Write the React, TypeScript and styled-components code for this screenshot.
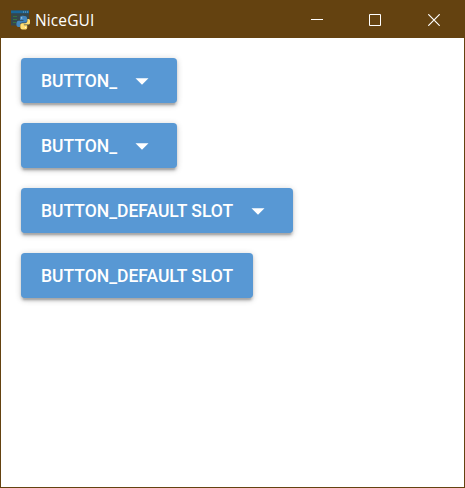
import React from "react";
import styled, { createGlobalStyle } from "styled-components";

const GlobalStyle = createGlobalStyle`
  body {
    margin: 0;
    overflow: hidden;
  }
`;

const Window = styled.div`
  box-sizing: border-box;
  display: flex;
  flex-direction: column;
  width: 465px;
  height: 488px;
  border: 1px solid #644210;
  background: #fff;
`;

const TitleBar = styled.header`
  box-sizing: border-box;
  display: flex;
  align-items: center;
  flex: none;
  height: 37px;
  padding-left: 10px;
  background: #644210;
  color: #fff;
`;

const AppIcon = styled.svg`
  width: 19px;
  height: 20px;
  flex: none;
`;

const Title = styled.span`
  flex: 1;
  margin-left: 5px;
  font: 15.5px/20px "Open Sans", "Noto Sans", sans-serif;
  letter-spacing: 0.12px;
`;

const WindowControl = styled.button`
  display: flex;
  align-items: center;
  justify-content: center;
  width: 58px;
  height: 36px;
  padding: 0;
  border: 0;
  background: transparent;
  color: #fff;

  &:last-child {
    width: 60px;
  }
`;

const ControlGlyph = styled.svg`
  width: 12px;
  height: 12px;
  fill: none;
  stroke: currentColor;
`;

const Content = styled.main`
  display: flex;
  flex-direction: column;
  align-items: flex-start;
  gap: 20px;
  padding: 20px;
`;

const Button = styled.button<{ $width: number }>`
  box-sizing: border-box;
  display: flex;
  align-items: center;
  width: ${({ $width }) => $width}px;
  height: 45px;
  padding: 0 20px;
  border: 0;
  border-radius: 3.75px;
  background: #5898d4;
  color: #fff;
  font: 500 17.5px/30px Roboto, sans-serif;
  text-transform: uppercase;
  white-space: nowrap;
  box-shadow:
    0 1.25px 6.25px rgba(0, 0, 0, 0.2),
    0 2.5px 2.5px rgba(0, 0, 0, 0.14),
    0 3.75px 1.25px -2.5px rgba(0, 0, 0, 0.12);
`;

const Arrow = styled.svg`
  width: 30px;
  height: 30px;
  flex: none;
  margin-left: auto;
  fill: currentColor;
`;

const buttons = [
  { label: "Button_", dropdown: true, width: 156 },
  { label: "Button_", dropdown: true, width: 156 },
  { label: "Button_default slot", dropdown: true, width: 272 },
  { label: "Button_default slot", dropdown: false, width: 232 },
];

export default function App() {
  return (
    <Window>
      <GlobalStyle />
      <TitleBar>
        <AppIcon viewBox="0 0 19 20">
          <path fill="#35474c" d="M0 .5h18v15H0z" />
          <path fill="#1a6799" d="M0 .5h18v2.7H0z" />
          <path fill="#83a9c1" d="M12 1.5h1v1h-1zm2 0h1v1h-1zm2 0h1v1h-1z" />
          <path stroke="#367340" d="M2 6.5h4M2 9.5h4M2 12.5h3" />
          <g transform="translate(0 -1.6) scale(1 1.06)">
            <path
              fill="#4386bd"
              d="M12 7c-3 0-3 1.3-3 2.4V11h3.5v.7H7.7C6 11.7 5.4 13 5.4 14.7S6 17.5 7.5 17.5H9v-2c0-1.5 1-2.3 2.4-2.3h3c1.1 0 1.7-.8 1.7-1.8V9.3C16.1 7.6 14.5 7 12 7z"
            />
            <path
              fill="#ffdf72"
              d="M13.2 20c3 0 3-1.3 3-2.3V16h-3.4v-.7h4.6c1.4 0 1.8-1.3 1.8-2.8S18.7 10 17.2 10h-.8v1.7c0 1.5-1 2.2-2.3 2.2h-3c-1.2 0-1.8.8-1.8 1.8v2C9.3 19.4 10.8 20 13.2 20z"
            />
            <circle cx="10.7" cy="9" r=".6" fill="#e4f0f6" />
            <circle cx="14.5" cy="18" r=".6" fill="#fff9d7" />
          </g>
        </AppIcon>
        <Title>NiceGUI</Title>
        <WindowControl aria-label="Minimize">
          <ControlGlyph viewBox="0 0 12 12">
            <path d="M0 5.5h12" />
          </ControlGlyph>
        </WindowControl>
        <WindowControl aria-label="Maximize">
          <ControlGlyph viewBox="0 0 12 12">
            <path d="M.5.5h11v11H.5z" />
          </ControlGlyph>
        </WindowControl>
        <WindowControl aria-label="Close">
          <ControlGlyph viewBox="0 0 12 12">
            <path strokeWidth="1.2" d="M.3.3l11.4 11.4M11.7.3L.3 11.7" />
          </ControlGlyph>
        </WindowControl>
      </TitleBar>
      <Content>
        {buttons.map(({ label, dropdown, width }, index) => (
          <Button key={index} $width={width}>
            {label}
            {dropdown && (
              <Arrow viewBox="0 0 24 24">
                <path d="M6.8 9.8l5.2 5.2 5.2-5.2z" />
              </Arrow>
            )}
          </Button>
        ))}
      </Content>
    </Window>
  );
}
